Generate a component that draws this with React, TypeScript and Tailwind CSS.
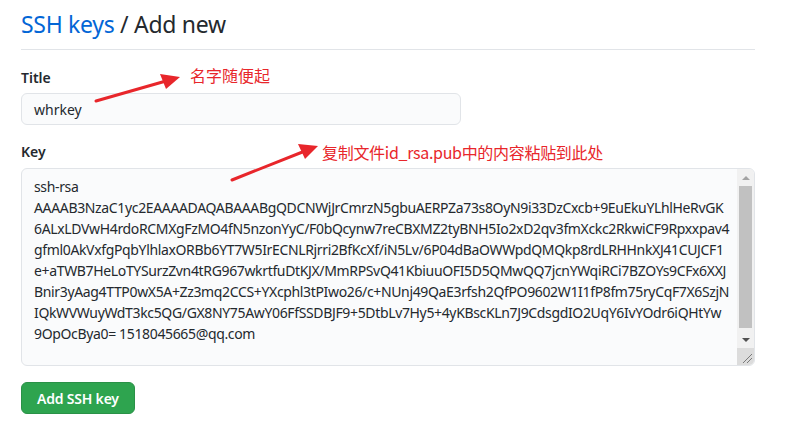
import React from "react";

const lines = [
  "ssh-rsa",
  "AAAAB3NzaC1yc2EAAAADAQABAAABgQDCNWjJrCmrzN5gbuAERPZa73s8OyN9i33DzCxcb+9EuEkuYLhlHeRvGK",
  "6ALxLDVwH4rdoRCMXgFzMO4fN5nzonYyC/F0bQcynw7reCBXMZ2tyBNH5Io2xD2qv3fmXckc2RkwiCF9Rpxxpav4",
  "gfml0AkVxfgPqbYlhlaxORBb6YT7W5IrECNLRjrri2BfKcXf/iN5Lv/6P04dBaOWWpdQMQkp8rdLRHHnkXJ41CUJCF1",
  "e+aTWB7HeLoTYSurzZvn4tRG967wkrtfuDtKJX/MmRPSvQ41KbiuuOFI5D5QMwQQ7jcnYWqiRCi7BZOYs9CFx6XXJ",
  "Bnir3yAag4TTP0wX5A+Zz3mq2CCS+YXcphl3tPIwo26/c+NUnj49QaE3rfsh2QfPO9602W1I1fP8fm75ryCqF7X6SzjN",
  "IQkWVWuyWdT3kc5QG/GX8NY75AwY06FfSSDBJF9+5DtbLv7Hy5+4yKBscKLn7J9CdsgdIO2UqY6IvYOdr6iQHtYw",
  "9OpOcBya0= 1518045665@qq.com",
];

const font = "font-['Noto_Sans','Open_Sans',sans-serif]";

export default function App() {
  return (
    <div className={`relative w-[794px] h-[436px] bg-white ${font} text-[#24292e]`}>
      <div className="pl-[21px] w-[755px]">
        <div className="pt-[7px] pb-[8px] border-b border-[#e1e4e8] text-[23px] tracking-[-0.3px] leading-[34px]">
          <span className="text-[#0366d6]">SSH keys</span> / Add new
        </div>
        <div className="mt-[18px] text-[14px] font-semibold leading-[20px]">Title</div>
        <div className="mt-[5px] w-[440px] h-[32px] rounded-[6px] border border-[#e1e4e8] bg-[#fafbfc] flex items-center pl-[12px] text-[14px]">
          whrkey
        </div>
        <div className="mt-[17px] text-[14px] font-semibold leading-[20px]">Key</div>
        <div className="mt-[6px] h-[198px] rounded-[6px] border border-[#e1e4e8] bg-[#fafbfc] flex overflow-hidden">
          <div className="flex-1 pl-[12px] pt-[7px] text-[14px] leading-[21px] tracking-[-0.35px] whitespace-nowrap overflow-hidden">
            {lines.map((l, i) => (
              <div key={i}>{l}</div>
            ))}
          </div>
          <div className="w-[17px] bg-[#f1f1f1] flex flex-col">
            <div className="h-[17px] flex items-center justify-center">
              <div className="w-0 h-0 border-l-[4px] border-r-[4px] border-b-[4px] border-l-transparent border-r-transparent border-b-[#a3a3a3]" />
            </div>
            <div className="mx-[2px] h-[142px] bg-[#c1c1c1]" />
            <div className="flex-1" />
            <div className="h-[17px] flex items-center justify-center">
              <div className="w-0 h-0 border-l-[4px] border-r-[4px] border-t-[4px] border-l-transparent border-r-transparent border-t-[#505050]" />
            </div>
            <div className="h-[17px] bg-[#dcdcdc] relative">
              <svg width="17" height="17" className="absolute inset-0">
                <line x1="6" y1="15" x2="15" y2="6" stroke="#7a7a7a" strokeWidth="1" />
                <line x1="10" y1="15" x2="15" y2="10" stroke="#7a7a7a" strokeWidth="1" />
              </svg>
            </div>
          </div>
        </div>
        <button className="mt-[16px] h-[32px] px-[15px] rounded-[6px] bg-[#2ea44f] border border-[#2a9147] text-white text-[14px] font-semibold tracking-[-0.2px]">
          Add SSH key
        </button>
      </div>

      {/* annotations */}
      <svg className="absolute left-0 top-0" width="794" height="436">
        <line x1="96" y1="101" x2="166" y2="81" stroke="#e8262b" strokeWidth="3" strokeLinecap="round" />
        <polygon points="180,77 160,74 166,89" fill="#e8262b" />
        <line x1="232" y1="180" x2="305" y2="151" stroke="#e8262b" strokeWidth="3" strokeLinecap="round" />
        <polygon points="318,146 298,144 305,159" fill="#e8262b" />
      </svg>
      <div className="absolute left-[190px] top-[64px] text-[16px] leading-[22px] text-[#e8262b] font-['Noto_Sans_CJK_SC',sans-serif]">
        名字随便起
      </div>
      <div className="absolute left-[322px] top-[140px] text-[16px] leading-[24px] tracking-[-0.3px] text-[#e8262b] font-['Noto_Sans_CJK_SC',sans-serif]">
        复制文件id_rsa.pub中的内容粘贴到此处
      </div>
    </div>
  );
}
